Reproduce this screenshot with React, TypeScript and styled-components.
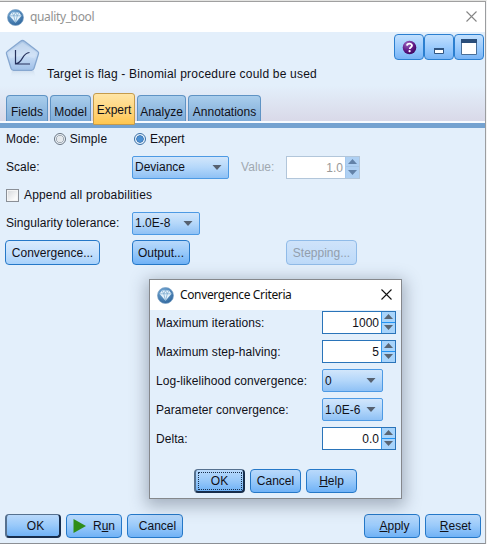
import React from "react";
import styled, { createGlobalStyle, css } from "styled-components";

const GlobalStyle = createGlobalStyle`
  * { box-sizing: border-box; }
  body {
    margin: 0;
    overflow: hidden;
    font: 12px/16px "Liberation Sans", Arial, sans-serif;
    color: #101018;
    background: #e3effb;
  }
  button { font: inherit; color: inherit; margin: 0; }
  svg { flex: none; }
`;

const Window = styled.div`
  position: relative;
  width: 487px;
  height: 544px;
  display: flex;
  flex-direction: column;
  background: #e3effb;
  border-top: 1px solid #e4e4e2;
  border-right: 1px solid #f4f4f4;
  overflow: hidden;
`;

const Frame = styled.div`
  flex: 1;
  display: flex;
  flex-direction: column;
  border-top: 1px solid #a0a0a0;
  border-right: 1px solid #9b9da0;
  border-bottom: 1px solid #8c8f94;
`;

const TitleBar = styled.div<{ $muted?: boolean }>`
  display: flex;
  align-items: center;
  height: 30px;
  padding: 0 ${(p) => (p.$muted ? 8 : 9)}px 0 7px;
  background: #fff;
  color: ${(p) => (p.$muted ? "#929292" : "#101010")};
  font: 12px/16px "Noto Sans", sans-serif;
`;

const TitleText = styled.span`
  flex: 1;
  padding-left: 6px;
  white-space: nowrap;
  letter-spacing: -0.36px;
`;

const Header = styled.div`
  display: flex;
  flex-direction: column;
  height: 89px;
  padding: 2px 1px 0 5px;
  background: linear-gradient(#e3effb 0, #e3effb 60%, #d9d9e8 100%);
`;

const HeaderTop = styled.div`
  display: flex;
  height: 59px;
`;

const HeaderText = styled.div`
  flex: 1;
  padding: 32px 0 0 7px;
  letter-spacing: 0.2px;
  white-space: nowrap;
`;

const ToolGroup = styled.div`
  display: flex;
  height: 26px;
`;

const ToolButton = styled.button`
  display: flex;
  align-items: center;
  justify-content: center;
  width: 30px;
  height: 26px;
  padding: 0;
  border: 1px solid #2b7fd0;
  border-radius: 4px;
  background: linear-gradient(#c2e0fe, #8ec3fb 70%, #78b3f4);
`;

const Tabs = styled.div`
  display: flex;
  align-items: flex-start;
  height: 28px;
  margin-left: 1px;
`;

const Tab = styled.div<{ $width: number; $active?: boolean }>`
  width: ${(p) => p.$width}px;
  height: 26px;
  margin: 2px 2px 0 0;
  border: 1px solid #5f93c4;
  border-bottom: 0;
  border-radius: 4px 4px 0 0;
  background: linear-gradient(#a9cdec, #7facd8);
  text-align: center;
  line-height: 32px;
  white-space: nowrap;
  ${(p) =>
    p.$active &&
    css`
      position: relative;
      z-index: 1;
      height: 32px;
      margin-top: 0;
      border: 1px solid #c59b4b;
      border-radius: 3px 3px 1px 1px;
      background: linear-gradient(#ffe5a6, #ffd274 65%, #ffc64e);
    `}
`;

const TabStrip = styled.div`
  height: 7px;
  border-top: 2px solid #f8fbff;
  background: #74a2d0;
`;

const Form = styled.div`
  flex: 1;
  padding: 0 0 0 5px;
`;

const FormRow = styled.div<{ $height: number }>`
  display: grid;
  grid-template-columns: 127px 108px 46px 1fr;
  align-items: center;
  height: ${(p) => p.$height}px;
`;

const Label = styled.span<{ $disabled?: boolean }>`
  padding-left: 1px;
  white-space: nowrap;
  letter-spacing: 0.06px;
  color: ${(p) => (p.$disabled ? "#a0a8b0" : "inherit")};
`;

const Inline = styled.div<{ $gap: number; $indent?: number; $spacing?: number }>`
  display: flex;
  align-items: center;
  gap: ${(p) => p.$gap}px;
  padding-left: ${(p) => p.$indent ?? 0}px;
  letter-spacing: ${(p) => p.$spacing ?? 0}px;
  white-space: nowrap;
`;

const Radio = styled.span<{ $checked?: boolean }>`
  flex: none;
  width: 12px;
  height: 12px;
  border: 1px solid ${(p) => (p.$checked ? "#3b6fa5" : "#687482")};
  border-radius: 50%;
  background: ${(p) =>
    p.$checked
      ? "radial-gradient(circle, #4b8fd2 0 2.6px, #346fae 3.4px, #e8f3fd 4px)"
      : "radial-gradient(circle, #e4e8ec 0 3px, #9aa4ae 3.6px, #eef4fa 4.4px)"};
`;

const CheckBox = styled.span`
  flex: none;
  width: 13px;
  height: 13px;
  border: 1px solid #8a8f96;
  background: linear-gradient(135deg, #d5d7da, #fafafa 75%);
  box-shadow: inset 0 0 0 1px #f4f4f4;
`;

const SelectBox = styled.div<{ $width: number }>`
  display: flex;
  align-items: center;
  justify-content: space-between;
  width: ${(p) => p.$width}px;
  height: 23px;
  padding: 0 6px 0 2px;
  border: 1px solid #4d9ae4;
  border-radius: 2px;
  background: linear-gradient(#d2e6fb, #b4d7fa 50%, #8fc1f5);
`;

const SpinBox = styled.div<{ $disabled?: boolean }>`
  display: flex;
  width: 74px;
  height: 23px;
  border: 1px solid ${(p) => (p.$disabled ? "#b2c6da" : "#2a74b9")};
  background: #fff;
  color: ${(p) => (p.$disabled ? "#999" : "inherit")};
  line-height: 22px;
`;

const SpinValue = styled.span`
  flex: 1;
  padding-right: 2px;
  text-align: right;
`;

const StepHalf = styled.span`
  display: flex;
  align-items: center;
  justify-content: center;
  width: 100%;
  height: 100%;
`;

const Stepper = styled.span<{ $disabled?: boolean }>`
  display: grid;
  grid-template-rows: 1fr 1fr;
  width: 14px;
  background: ${(p) => (p.$disabled ? "#aed0f3" : "#a8d4fb")};
  border-left: 1px solid ${(p) => (p.$disabled ? "#a4c8ee" : "#3396ea")};
  ${StepHalf}:first-child {
    border-bottom: 1px solid ${(p) => (p.$disabled ? "#a4c6e8" : "#2292f2")};
  }
`;

const Button = styled.button<{
  $width: number;
  $height?: number;
  $tone?: "light" | "disabled" | "default";
  $shift?: number;
}>`
  display: flex;
  align-items: center;
  justify-content: center;
  width: ${(p) => p.$width}px;
  height: ${(p) => p.$height ?? 24}px;
  padding: 0 0 0 ${(p) => p.$shift ?? 0}px;
  border: 1px solid #2578c8;
  border-radius: 4px;
  background: linear-gradient(#b9d9fb, #9ccbfa 45%, #70b2f6);
  white-space: nowrap;
  ${(p) =>
    p.$tone === "light" &&
    css`
      background: linear-gradient(#d9ebfd, #c5e0fc 50%, #a9d2fb);
    `}
  ${(p) =>
    p.$tone === "disabled" &&
    css`
      border-color: #90bbe8;
      background: linear-gradient(#cfe3fa, #bddaf9);
      color: #929ead;
    `}
  ${(p) =>
    p.$tone === "default" &&
    css`
      border: 2px solid #172d4c;
      border-top: 1px solid #56718f;
      border-left-color: #56718f;
    `}
`;

const FocusRing = styled.span`
  display: flex;
  align-items: center;
  justify-content: center;
  width: 44px;
  height: 18px;
  border: 1px dotted #18314f;
`;

const Footer = styled.div`
  display: flex;
  gap: 5px;
  height: 29px;
  padding: 0 4px 0 5px;
`;

const Spacer = styled.span`
  flex: 1;
`;

const Dialog = styled.div`
  position: absolute;
  left: 149px;
  top: 278px;
  width: 253px;
  height: 220px;
  display: flex;
  flex-direction: column;
  border: 1px solid #85888c;
  background: #e3effb;
  box-shadow: 0 4px 15px 3px rgba(45, 55, 75, 0.34);
`;

const DialogBody = styled.div`
  display: flex;
  flex-direction: column;
  gap: 6px;
  padding: 1px 0 0 5px;
`;

const DialogRow = styled.div`
  display: grid;
  grid-template-columns: 167px 1fr;
  align-items: center;
  height: 23px;
`;

const DialogActions = styled.div`
  display: flex;
  gap: 5px;
  padding: 19px 0 0 44px;
`;

const RunIcon = styled.svg`
  margin-right: 7px;
`;

const AppIcon = () => (
  <svg width="17" height="17" viewBox="0 0 17 17">
    <defs>
      <radialGradient id="orb" cx=".4" cy=".3" r=".75">
        <stop offset="0" stopColor="#7cb0dc" />
        <stop offset="1" stopColor="#2b6299" />
      </radialGradient>
    </defs>
    <circle cx="8.5" cy="8.5" r="8" fill="url(#orb)" stroke="#7ea5c7" strokeWidth=".7" />
    <path d="M5 3.500h7l2.500 3.300-6 7-6-7z" fill="#e5f2fb" />
    <path d="M5 3.500l1.800 3.300L8.500 3.500l1.800 3.300L12 3.500M2.500 6.800h12M6.800 6.800l1.700 7 1.800-7" fill="none" stroke="#78a7cd" strokeWidth=".7" />
  </svg>
);

const NodeIcon = () => (
  <svg width="35" height="44" viewBox="0 0 35 44">
    <defs>
      <linearGradient id="node" x1="0" y1="0" x2="0" y2="1">
        <stop offset="0" stopColor="#a9c4e4" />
        <stop offset=".5" stopColor="#c9ddf5" />
        <stop offset="1" stopColor="#9fbfe8" />
      </linearGradient>
      <linearGradient id="fade" x1="0" y1="0" x2="0" y2="1">
        <stop offset="0" stopColor="#cbdaea" />
        <stop offset="1" stopColor="#e3effb" stopOpacity="0" />
      </linearGradient>
    </defs>
    <path d="M7 37h22l2 7H5z" fill="url(#fade)" opacity=".7" />
    <path d="M17.5 6.500q1 0 2 .8l13 10q1.500 1 1 2.500l-4.500 14.500q-.6 2-2.500 2h-18q-1.900 0-2.500-2l-4.500-14.500q-.5-1.500 1-2.500l13-10q1-.8 2-.8z" fill="url(#node)" stroke="#86a7d0" strokeWidth="1.300" />
    <path d="M17.500 8.500l14 10-2 6q-12-5-24 0l-2-6z" fill="#e0ecfa" opacity=".35" />
    <path d="M10.500 16v14h14.500M11 29.500c7 0 5.500-10.500 13.500-11" fill="none" stroke="#26315c" strokeWidth="1.200" />
  </svg>
);

const CloseIcon = ({ color }: { color: string }) => (
  <svg width="11" height="12" viewBox="0 0 11 12">
    <path d="M.5.500l10 10M10.500.500l-10 10" stroke={color} strokeWidth="1.100" />
  </svg>
);

const HelpIcon = () => (
  <svg width="15" height="15" viewBox="0 0 15 15">
    <defs>
      <radialGradient id="purple" cx=".35" cy=".25" r=".8">
        <stop offset="0" stopColor="#9b65bd" />
        <stop offset=".6" stopColor="#601886" />
        <stop offset="1" stopColor="#3c075c" />
      </radialGradient>
    </defs>
    <circle cx="7.500" cy="7.500" r="6.800" fill="url(#purple)" />
    <path d="M5 5.600c.1-2.600 5-2.600 5 0 0 1.600-2.300 1.500-2.300 3.300" fill="none" stroke="#fff" strokeWidth="1.800" />
    <circle cx="7.600" cy="11.200" r="1.100" fill="#fff" />
  </svg>
);

const MinimizeIcon = () => (
  <svg width="16" height="18" viewBox="0 0 16 18">
    <path d="M3.500 10.500h9v5h-9z" fill="#fff" stroke="#315581" />
    <path d="M3 10h10v2H3z" fill="#315581" />
  </svg>
);

const MaximizeIcon = () => (
  <svg width="16" height="16" viewBox="0 0 16 16">
    <path d="M.5.500h15v15H.5z" fill="#fff" stroke="#486e98" />
    <path d="M0 0h16v4H0z" fill="#294d79" />
  </svg>
);

const Arrow = ({ up, size = 9, color = "#566170" }: { up?: boolean; size?: number; color?: string }) => (
  <svg width={size} height="5" viewBox="0 0 9 5">
    <path d={up ? "M0 5h9L4.500 0z" : "M0 0h9L4.500 5z"} fill={color} />
  </svg>
);

const Select = ({ width, value }: { width: number; value: string }) => (
  <SelectBox $width={width}>
    {value}
    <Arrow size={10} />
  </SelectBox>
);

const Spin = ({ value, disabled }: { value: string; disabled?: boolean }) => {
  const arrowColor = disabled ? "#6282a8" : "#596675";
  return (
    <SpinBox $disabled={disabled}>
      <SpinValue>{value}</SpinValue>
      <Stepper $disabled={disabled}>
        <StepHalf><Arrow up color={arrowColor} /></StepHalf>
        <StepHalf><Arrow color={arrowColor} /></StepHalf>
      </Stepper>
    </SpinBox>
  );
};

export default function App() {
  return (
    <>
      <GlobalStyle />
      <Window>
        <Frame>
          <TitleBar $muted>
            <AppIcon />
            <TitleText>quality_bool</TitleText>
            <CloseIcon color="#858585" />
          </TitleBar>
          <Header>
            <HeaderTop>
              <NodeIcon />
              <HeaderText>Target is flag - Binomial procedure could be used</HeaderText>
              <ToolGroup>
                <ToolButton><HelpIcon /></ToolButton>
                <ToolButton><MinimizeIcon /></ToolButton>
                <ToolButton><MaximizeIcon /></ToolButton>
              </ToolGroup>
            </HeaderTop>
            <Tabs>
              <Tab $width={42}>Fields</Tab>
              <Tab $width={41}>Model</Tab>
              <Tab $width={42} $active>Expert</Tab>
              <Tab $width={49}>Analyze</Tab>
              <Tab $width={73}>Annotations</Tab>
            </Tabs>
          </Header>
          <TabStrip />
          <Form>
            <FormRow $height={22}>
              <Inline $gap={14}>
                <Label>Mode:</Label>
                <Inline $gap={4} $spacing={0.15}><Radio />Simple</Inline>
              </Inline>
              <Inline $gap={4} $indent={2}><Radio $checked />Expert</Inline>
            </FormRow>
            <FormRow $height={34}>
              <Label>Scale:</Label>
              <Select width={97} value="Deviance" />
              <Label $disabled>Value:</Label>
              <Spin value="1.0" disabled />
            </FormRow>
            <FormRow $height={22}>
              <Inline $gap={5} $indent={1} $spacing={0.17}><CheckBox />Append all probabilities</Inline>
            </FormRow>
            <FormRow $height={34}>
              <Label>Singularity tolerance:</Label>
              <Select width={68} value="1.0E-8" />
            </FormRow>
            <FormRow $height={25}>
              <Button $width={95} $height={25} $tone="light">Convergence...</Button>
              <Button $width={58} $height={25}>Output...</Button>
              <span />
              <Button $width={71} $height={25} $tone="disabled">Stepping...</Button>
            </FormRow>
          </Form>
          <Footer>
            <Button $width={56} $tone="default" $shift={5}>OK</Button>
            <Button $width={56}>
              <RunIcon width="13" height="14" viewBox="0 0 13 14">
                <path d="M.5 0L13 7 .5 14z" fill="#2f8d18" />
              </RunIcon>
              <span>R<u>u</u>n</span>
            </Button>
            <Button $width={56} $shift={5}>Cancel</Button>
            <Spacer />
            <Button $width={56} $shift={5}><span><u>A</u>pply</span></Button>
            <Button $width={56} $shift={5}><span><u>R</u>eset</span></Button>
          </Footer>
        </Frame>
        <Dialog>
          <TitleBar>
            <AppIcon />
            <TitleText>Convergence Criteria</TitleText>
            <CloseIcon color="#111" />
          </TitleBar>
          <DialogBody>
            <DialogRow><Label>Maximum iterations:</Label><Spin value="1000" /></DialogRow>
            <DialogRow><Label>Maximum step-halving:</Label><Spin value="5" /></DialogRow>
            <DialogRow><Label>Log-likelihood convergence:</Label><Select width={61} value="0" /></DialogRow>
            <DialogRow><Label>Parameter convergence:</Label><Select width={61} value="1.0E-6" /></DialogRow>
            <DialogRow><Label>Delta:</Label><Spin value="0.0" /></DialogRow>
          </DialogBody>
          <DialogActions>
            <Button $width={51} $tone="default"><FocusRing>OK</FocusRing></Button>
            <Button $width={51}>Cancel</Button>
            <Button $width={51}><span><u>H</u>elp</span></Button>
          </DialogActions>
        </Dialog>
      </Window>
    </>
  );
}
